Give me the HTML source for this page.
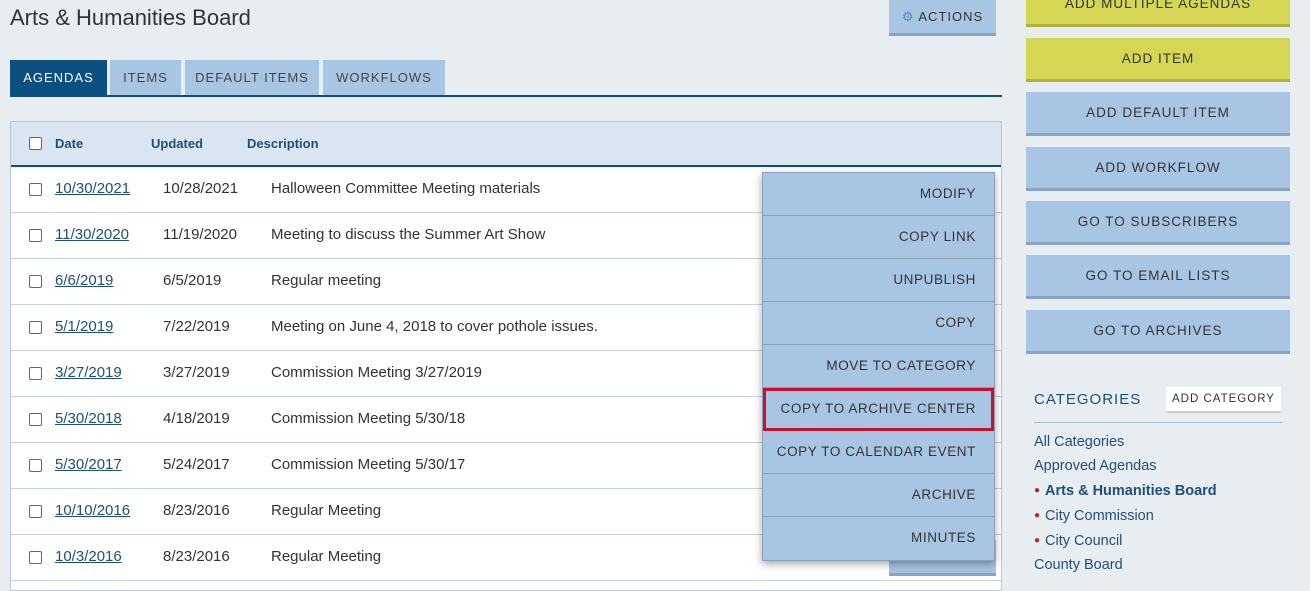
<!DOCTYPE html>
<html><head><meta charset="utf-8"><style>
*{box-sizing:border-box;margin:0;padding:0}
body{width:1310px;height:581px;overflow:hidden;background:#e8edf2;font-family:"Liberation Sans",sans-serif;position:relative;color:#333}
.abs{position:absolute}
h1{position:absolute;left:10px;top:5px;font-size:22px;font-weight:normal;color:#333}
.btn{position:absolute;background:#a8c6e4;border-bottom:3px solid #8aa3c0;text-align:center;font-size:13.5px;letter-spacing:1px;color:#333}
.y{background:#d4d654;border-bottom-color:#b1b23f}
.tab{position:absolute;top:60px;height:36px;background:#a8c6e4;font-size:13px;letter-spacing:1px;line-height:36px;text-align:center;color:#444}
.panel{position:absolute;left:10px;top:121px;width:992px;height:470px;background:#fff;border:1px solid #b9c6d4}
.head{height:45px;background:#dae5f1;border-bottom:2px solid #0c4f80;position:relative}
.head span{position:absolute;top:14px;font-size:13px;font-weight:bold;color:#1f4f7a}
.row{height:46px;border-bottom:1px solid #c9d2dc;position:relative;font-size:15px}
.row span{position:absolute;top:13px}
.cb{position:absolute;left:18px;width:13px;height:13px;border:1px solid #666;border-radius:2px;background:#fff}
.d{left:44px;color:#1f4f7a;text-decoration:underline}
.u{left:152px}.ds{left:260px}
.menu{position:absolute;left:762px;top:172px;width:233px;background:#a8c6e4;border:1px solid #8aa0b8;box-shadow:0 3px 8px rgba(0,0,0,.35)}
.mi{height:43px;line-height:42px;text-align:right;padding-right:18px;font-size:13.5px;letter-spacing:0.6px;color:#333;border-bottom:1px solid #8aa0b8}
.mi:last-child{border-bottom:0}
.hl{outline:3px solid #c8102e;outline-offset:-3px}
.cat{position:absolute;left:1034px;font-size:14.5px;color:#1f4f7a}
.dot{color:#b22;font-size:10px;margin-right:5px;vertical-align:2px}
</style></head><body>
<h1>Arts &amp; Humanities Board</h1>
<div class="btn" style="left:889px;top:0;width:107px;height:36px;line-height:34px;font-size:13px"><span style="color:#4a8ac8">⚙</span> ACTIONS</div>
<div class="tab" style="left:10px;width:97px;background:#0c4f80;color:#fff">AGENDAS</div>
<div class="tab" style="left:110px;width:71px">ITEMS</div>
<div class="tab" style="left:185px;width:134px">DEFAULT ITEMS</div>
<div class="tab" style="left:323px;width:122px">WORKFLOWS</div>
<div class="abs" style="left:10px;top:95px;width:992px;height:2px;background:#0c4f80"></div>
<div class="panel">
<div class="head"><div class="cb" style="top:15px"></div><span style="left:44px">Date</span><span style="left:140px">Updated</span><span style="left:236px">Description</span></div>
<div class="row"><div class="cb" style="top:16px"></div><span class="d">10/30/2021</span><span class="u">10/28/2021</span><span class="ds">Halloween Committee Meeting materials</span></div>
<div class="row"><div class="cb" style="top:16px"></div><span class="d">11/30/2020</span><span class="u">11/19/2020</span><span class="ds">Meeting to discuss the Summer Art Show</span></div>
<div class="row"><div class="cb" style="top:16px"></div><span class="d">6/6/2019</span><span class="u">6/5/2019</span><span class="ds">Regular meeting</span></div>
<div class="row"><div class="cb" style="top:16px"></div><span class="d">5/1/2019</span><span class="u">7/22/2019</span><span class="ds">Meeting on June 4, 2018 to cover pothole issues.</span></div>
<div class="row"><div class="cb" style="top:16px"></div><span class="d">3/27/2019</span><span class="u">3/27/2019</span><span class="ds">Commission Meeting 3/27/2019</span></div>
<div class="row"><div class="cb" style="top:16px"></div><span class="d">5/30/2018</span><span class="u">4/18/2019</span><span class="ds">Commission Meeting 5/30/18</span></div>
<div class="row"><div class="cb" style="top:16px"></div><span class="d">5/30/2017</span><span class="u">5/24/2017</span><span class="ds">Commission Meeting 5/30/17</span></div>
<div class="row"><div class="cb" style="top:16px"></div><span class="d">10/10/2016</span><span class="u">8/23/2016</span><span class="ds">Regular Meeting</span></div>
<div class="row"><div class="cb" style="top:16px"></div><span class="d">10/3/2016</span><span class="u">8/23/2016</span><span class="ds">Regular Meeting</span></div>
</div>
<div class="btn" style="left:889px;top:540px;width:107px;height:36px"></div>
<div class="menu">
<div class="mi">MODIFY</div><div class="mi">COPY LINK</div><div class="mi">UNPUBLISH</div><div class="mi">COPY</div><div class="mi">MOVE TO CATEGORY</div><div class="mi hl">COPY TO ARCHIVE CENTER</div><div class="mi">COPY TO CALENDAR EVENT</div><div class="mi">ARCHIVE</div><div class="mi">MINUTES</div>
</div>
<div class="btn y" style="left:1026px;top:-17px;width:264px;height:44px;line-height:41px">ADD MULTIPLE AGENDAS</div>
<div class="btn y" style="left:1026px;top:38px;width:264px;height:44px;line-height:42px">ADD ITEM</div>
<div class="btn" style="left:1026px;top:92px;width:264px;height:44px;line-height:42px">ADD DEFAULT ITEM</div>
<div class="btn" style="left:1026px;top:147px;width:264px;height:44px;line-height:42px">ADD WORKFLOW</div>
<div class="btn" style="left:1026px;top:201px;width:264px;height:44px;line-height:42px">GO TO SUBSCRIBERS</div>
<div class="btn" style="left:1026px;top:255px;width:264px;height:44px;line-height:42px">GO TO EMAIL LISTS</div>
<div class="btn" style="left:1026px;top:310px;width:264px;height:44px;line-height:42px">GO TO ARCHIVES</div>
<div class="abs" style="left:1034px;top:391px;font-size:15px;letter-spacing:1px;color:#1f4f7a">CATEGORIES</div>
<div class="abs" style="left:1166px;top:387px;width:115px;height:26px;background:#fff;border-bottom:2px solid #ccc;font-size:11.5px;letter-spacing:1px;text-align:center;line-height:25px;color:#333">ADD CATEGORY</div>
<div class="abs" style="left:1034px;top:422px;width:248px;height:1px;background:#a9b8c8"></div>
<div class="cat" style="top:434px">All Categories</div>
<div class="cat" style="top:458px">Approved Agendas</div>
<div class="cat" style="top:483px;font-weight:bold"><span class="dot">●</span>Arts &amp; Humanities Board</div>
<div class="cat" style="top:508px"><span class="dot">●</span>City Commission</div>
<div class="cat" style="top:533px"><span class="dot">●</span>City Council</div>
<div class="cat" style="top:557px">County Board</div>
</body></html>
